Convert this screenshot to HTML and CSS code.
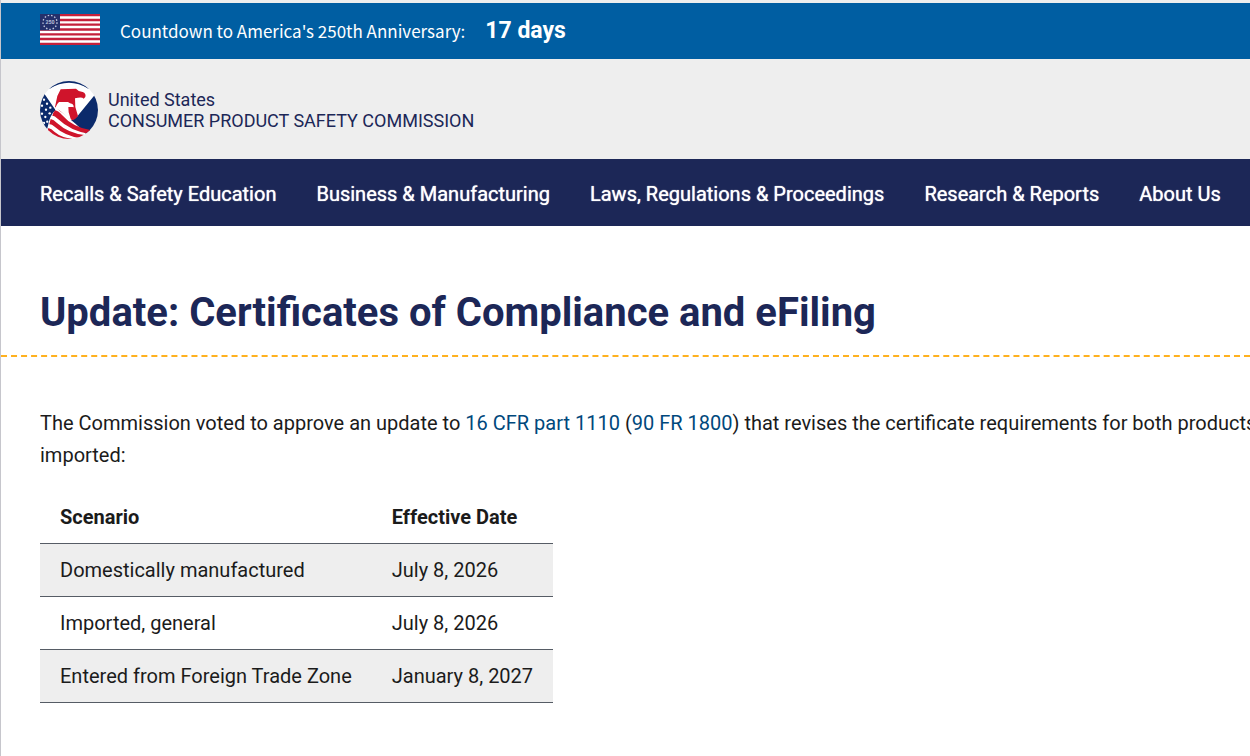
FILE: index.html
```html
<!DOCTYPE html>
<html lang="en">
<head>
  <meta charset="UTF-8">
  <meta name="viewport" content="width=device-width, initial-scale=1.0">
  <title>Update: Certificates of Compliance and eFiling | CPSC.gov</title>
  <link rel="stylesheet" href="styles.css">
</head>
<body>

  <!-- Countdown banner -->
  <div class="countdown">
    <svg class="flag" viewBox="0 0 180 93" preserveAspectRatio="none" aria-hidden="true">
      <rect width="180" height="93" fill="#fff"/>
      <path d="M0 3.500h180M0 18h180M0 32h180M0 46.500h180M0 61h180M0 75h180M0 89.500h180" stroke="#c4203b" stroke-width="7.200"/>
      <rect width="60" height="49" fill="#24306b"/>
      <circle cx="30" cy="25" r="21" fill="none" stroke="#c3c9df" stroke-width="4" stroke-dasharray="4.500 5.650"/>
      <text x="30" y="31" class="flag-num">250</text>
    </svg>
    <span class="countdown-label">Countdown to America's 250th Anniversary:</span>
    <strong class="countdown-days">17 days</strong>
  </div>

  <!-- Logo -->
  <header class="site-header">
    <a href="/" class="logo">
      <svg class="seal" viewBox="0 0 174 174" aria-hidden="true">
        <defs>
          <clipPath id="seal-clip"><circle cx="87" cy="87" r="87"/></clipPath>
        </defs>
        <g clip-path="url(#seal-clip)">
          <rect width="174" height="174" fill="#fff"/>
          <!-- top arc -->
          <path d="M28 24Q87 -14 146 24V0H28z" fill="#0b2a6b"/>
          <path d="M28 24Q87 -8 146 24Q87 -2 28 24z" fill="#fff"/>
          <!-- right field -->
          <path d="M93 117Q104 115 112 106L166 40L176 50V174H152Q120 138 93 117z" fill="#0b2a6b"/>
          <!-- left field -->
          <path d="M13 38L47 88Q34 98 28 118L20 150L0 130V38z" fill="#0b2a6b"/>
          <g fill="#fff">
            <circle cx="12" cy="56" r="3.500"/><circle cx="6" cy="74" r="3.500"/><circle cx="21" cy="68" r="3.500"/>
            <circle cx="18" cy="86" r="3.500"/><circle cx="31" cy="80" r="3.500"/><circle cx="6" cy="98" r="3.500"/>
            <circle cx="29" cy="97" r="3.500"/><circle cx="16" cy="108" r="3.500"/><circle cx="22" cy="122" r="3.500"/>
            <circle cx="12" cy="126" r="3.500"/>
          </g>
          <!-- stripes -->
          <path d="M45 88Q54 89 66 102Q98 139 154 148L146 158Q92 150 54 114Q44 104 37 104Q40 94 45 88z" fill="#cf142b"/>
          <path d="M32 114Q41 115 51 126Q85 157 134 162L120 171Q76 166 42 136Q35 129 28 130z" fill="#cf142b"/>
          <path d="M25 141Q34 142 44 153Q64 170 98 174L80 176Q42 172 22 152z" fill="#cf142b"/>
          <!-- eagle -->
          <path d="M62 25L108 23Q114 31 128 33Q139 37 136 48L131 53Q126 47 105 52L106 78L114 105Q106 116 97 118L60 90L45 78L52 45Z" fill="#cf142b"/>
          <path d="M46 80Q51 68 57 63L84 63L90 67Q102 69 101 79L97 78L85 78L86 94L93 117Q75 105 62 91Q53 82 46 88z" fill="#fff"/>
        </g>
      </svg>
      <span class="logo-text">United States<br>CONSUMER PRODUCT SAFETY COMMISSION</span>
    </a>
  </header>

  <!-- Main menu -->
  <nav class="main-nav">
    <a href="/Recalls">Recalls &amp; Safety Education</a>
    <a href="/Business--Manufacturing">Business &amp; Manufacturing</a>
    <a href="/Regulations-Laws--Standards">Laws, Regulations &amp; Proceedings</a>
    <a href="/Research--Statistics">Research &amp; Reports</a>
    <a href="/About-CPSC">About Us</a>
  </nav>

  <main>
    <h1>Update: Certificates of Compliance and eFiling</h1>

    <div class="content">
      <p>The Commission voted to approve an update to <a href="#part-1110">16 CFR part 1110</a> (<a href="#fr-1800">90 FR 1800</a>) that revises the certificate requirements for both products<br>imported:</p>

      <table>
        <thead>
          <tr><th scope="col">Scenario</th><th scope="col">Effective Date</th></tr>
        </thead>
        <tbody>
          <tr><td>Domestically manufactured</td><td>July 8, 2026</td></tr>
          <tr><td>Imported, general</td><td>July 8, 2026</td></tr>
          <tr><td>Entered from Foreign Trade Zone</td><td>January 8, 2027</td></tr>
        </tbody>
      </table>
    </div>
  </main>

</body>
</html>
```
FILE: styles.css
```css
:root {
  --navy: #1c2757;
  --blue: #005ea2;
  --light-gray: #eee;
  --gold: #ffb11f;
  --text: #1b1b1b;
  --link: #00487c;
}
* { margin:0; padding:0; box-sizing:border-box }
body {
  font-family:Roboto,sans-serif;
  font-size:20px;
  line-height:32px;
  color:var(--text);
  background:#fff;
  border-left:1px solid #c6c6cc;
  min-height:100vh;
  overflow-x:hidden;
}
a { text-decoration:none; color:var(--link) }

/* Countdown banner */
.countdown {
  display:flex; align-items:center;
  height:59px; padding:0 39px;
  background:var(--blue); color:#fff;
  border-top:3px solid var(--light-gray);
}
.flag { width:60px; height:31px; margin:0 20px 3px 0 }
.flag-num {
  font-size:16px; font-weight:700;
  text-anchor:middle; fill:#b9c0da;
}
.countdown-label {
  font-family:"Noto Sans CJK SC",sans-serif;
  font-size:17px; margin-right:20px;
}
.countdown-days { font-size:23px; font-weight:700 }

/* Header */
.site-header { background:var(--light-gray); padding:22px 39px 20px }
.logo { display:flex; align-items:center; gap:10px; color:var(--navy) }
.seal { width:58px; height:58px }
.logo-text { font-size:18px; line-height:21px }

/* Main menu */
.main-nav {
  display:flex; gap:40px;
  padding:19px 39px 16px;
  background:var(--navy);
  white-space:nowrap;
}
.main-nav a { color:#fff; text-shadow:0 0 1px #fff }

/* Title */
h1 {
  padding:63px 39px 18px;
  font-size:40px; line-height:48px; font-weight:700;
  color:var(--navy);
  border-bottom:2px dashed var(--gold);
}

/* Content */
.content { padding:50px 39px }
.content p { white-space:nowrap; margin-bottom:20px }

table { border-collapse:collapse }
th, td {
  padding:10px 20px;
  text-align:left;
  border-bottom:1px solid #565c65;
}
tbody tr:nth-child(odd) { background:var(--light-gray) }
```
